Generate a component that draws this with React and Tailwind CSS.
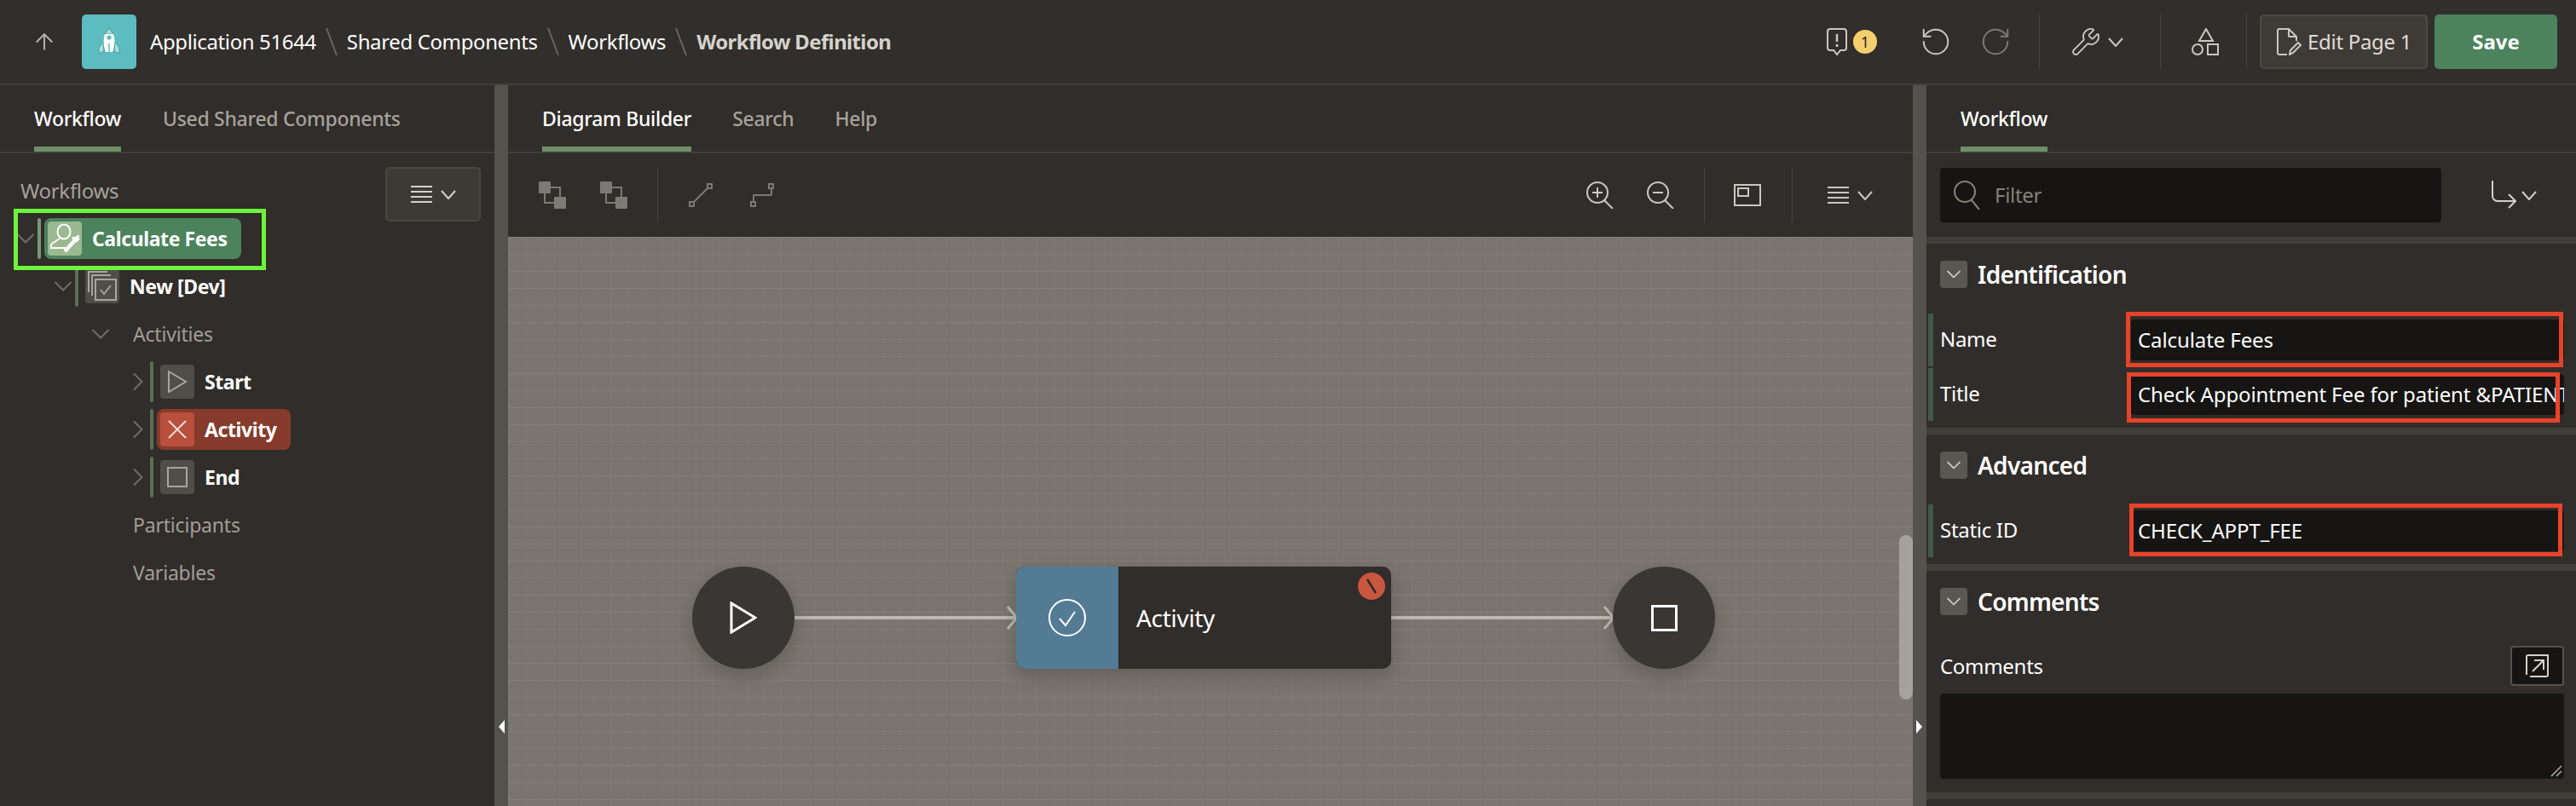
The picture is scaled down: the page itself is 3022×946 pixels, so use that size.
import { ChevronDown, ChevronRight, ArrowUp, Wrench, RotateCcw, RotateCw } from 'lucide-react';

const stroke = { fill: 'none', stroke: 'currentColor', strokeWidth: 2 };

function Chev({ className = 'w-5 h-5' }) {
    return <ChevronDown className={className} strokeWidth={1.5} />;
}

function MenuChev({ className = '' }) {
    return (
        <div className={`flex items-center gap-[10px] ${className}`}>
            <svg width="25" height="20" viewBox="0 0 25 20" {...stroke}>
                <path d="M0 1h25M0 7h25M0 13h25M0 19h25" />
            </svg>
            <svg width="18" height="11" viewBox="0 0 18 11" {...stroke}><path d="M1 1l8 9 8-9" /></svg>
        </div>
    );
}

function Tab({ label, active, className = '' }) {
    return (
        <div className={`h-full flex items-center relative ${active ? 'text-white' : 'text-[#a7a29c]'} ${className}`}>
            <span className="font-medium">{label}</span>
            {active && <div className="absolute left-0 right-0 bottom-0 h-[6px] bg-[#6f8f67]" />}
        </div>
    );
}

function Slash() {
    return (
        <svg width="14" height="34" viewBox="0 0 14 34" className="mx-[11px] text-[#6b6762]">
            <path d="M1 1l12 32" stroke="currentColor" strokeWidth="2" />
        </svg>
    );
}

function Header() {
    return (
        <div className="h-[100px] shrink-0 flex items-center border-b-2 border-[#423e3a] bg-[#312e2b]">
            <ArrowUp className="w-[30px] h-[30px] ml-[37px] text-[#b5b1ab]" strokeWidth={1.6} />
            <div className="ml-[29px] w-[64px] h-[64px] rounded-[5px] bg-[#5cbcbf] flex items-center justify-center">
                <svg width="26" height="34" viewBox="0 0 26 34">
                    <path d="M6 17l-5 7v7l6-3zM20 17l5 7v7l-6-3z" fill="#a9dcdb" stroke="#489a9c" strokeWidth="1" />
                    <path d="M13 1l5 7H8z" fill="#a9dcdb" stroke="#489a9c" strokeWidth="1" />
                    <path d="M8 8h10c2 5 2 14-1 21H9C6 22 6 13 8 8z" fill="#ffffff" />
                    <circle cx="13" cy="12" r="2.6" fill="#5cbcbf" />
                    <path d="M13 19v14" stroke="#5cbcbf" strokeWidth="1.5" />
                </svg>
            </div>
            <div className="ml-4 flex items-center text-[24px] text-white tracking-[-0.38px]">
                <span>Application 51644</span>
                <Slash />
                <span>Shared Components</span>
                <Slash />
                <span>Workflows</span>
                <Slash />
                <span className="font-bold text-[#d6d2cc] tracking-[-0.65px]">Workflow Definition</span>
            </div>

            <div className="ml-auto flex items-center h-[64px] text-[#cbc7c1]">
                <svg width="24" height="32" viewBox="0 0 24 32" {...stroke} className="mr-[7px]">
                    <path d="M4 1h16a3 3 0 0 1 3 3v19a3 3 0 0 1-3 3h-4l-4 5-4-5H4a3 3 0 0 1-3-3V4a3 3 0 0 1 3-3z" />
                    <path d="M12 7v9M12 19v3" strokeWidth="2.5" />
                </svg>
                <div className="w-[28px] h-[28px] rounded-full bg-[#f5cf6e] text-[#2b2826] text-[18px] flex items-center justify-center">1</div>
                <RotateCcw className="w-[38px] h-[38px] ml-[50px]" strokeWidth={1.25} />
                <RotateCw className="w-[38px] h-[38px] ml-[32px] text-[#7d7973]" strokeWidth={1.25} />
                <div className="w-px h-full bg-[#46423e] ml-[32px]" />
                <Wrench className="w-[36px] h-[36px] ml-[36px] -scale-x-100 rotate-90" strokeWidth={1.25} />
                <svg width="18" height="11" viewBox="0 0 18 11" {...stroke} className="ml-2"><path d="M1 1l8 9 8-9" /></svg>
                <div className="w-px h-full bg-[#46423e] ml-[43px]" />
                <svg width="32" height="32" viewBox="0 0 32 32" {...stroke} className="ml-[36px]">
                    <path d="M17 1l8 14H9z" />
                    <circle cx="7" cy="25" r="6" />
                    <rect x="19" y="19" width="12" height="12" />
                </svg>
                <div className="w-px h-full bg-[#46423e] ml-[32px]" />
                <div className="ml-[15px] w-[197px] h-[64px] rounded-[5px] border-2 border-[#4d4a45] bg-[#3e3b37] flex items-center pl-[18px]">
                    <svg width="30" height="32" viewBox="0 0 30 32" {...stroke}>
                        <path d="M12 31H3a2 2 0 0 1-2-2V3a2 2 0 0 1 2-2h11l9 9v5" />
                        <path d="M14 1v8a1 1 0 0 0 1 1h8" />
                        <path d="M15 31l1-5 9-9 3 3-9 9z" />
                    </svg>
                    <span className="ml-[6px] text-[24px] text-[#e0dcd6] tracking-[-0.3px]">Edit Page 1</span>
                </div>
                <div className="ml-[8px] mr-[22px] w-[144px] h-[64px] rounded-[5px] bg-[#4c825c] flex items-center justify-center text-white font-bold text-[24px]">Save</div>
            </div>
        </div>
    );
}

function TreeRow({ pad, chevron, label, icon, tone = 'plain', muted }) {
    return (
        <div className="h-[56px] flex items-center" style={{ paddingLeft: pad }}>
            <div className="w-[24px] shrink-0 flex justify-center text-[#6f6b66]">
                {chevron === 'down' && <ChevronDown className="w-[36px] h-[36px] shrink-0" strokeWidth={1.4} />}
                {chevron === 'right' && <ChevronRight className="w-[36px] h-[36px] shrink-0" strokeWidth={1.4} />}
            </div>
            {icon ? (
                <>
                    <div className={`ml-[2px] w-1 h-[48px] rounded-sm ${tone === 'green' ? 'bg-[#7b9577]' : 'bg-[#5a7054]'}`} />
                    <div
                        className={`ml-1 h-[48px] flex items-center rounded-[8px] pr-4 ${tone === 'error' ? 'bg-[#873b2c]' : tone === 'green' ? 'bg-[#4c825c]' : ''}`}
                    >
                        <div
                            className={`ml-1 w-[40px] h-[40px] rounded-[4px] flex items-center justify-center ${
                                tone === 'error' ? 'bg-[#b8503d] text-[#f6ddd6]' : tone === 'green' ? 'bg-[#9ab990] text-white' : 'bg-[#514d49] text-[#a8a49e]'
                            }`}
                        >
                            {icon}
                        </div>
                        <span className="ml-3 text-white font-bold text-[23px] tracking-[-0.4px]">{label}</span>
                    </div>
                </>
            ) : (
                <span className={`ml-[26px] text-[23px] tracking-[-0.2px] ${muted ? 'text-[#a29d97]' : 'text-white'}`}>{label}</span>
            )}
        </div>
    );
}

function LeftPanel() {
    return (
        <div className="w-[580px] shrink-0 flex flex-col bg-[#312d2a]">
            <div className="h-[80px] shrink-0 flex items-center pl-10 gap-[49px] border-b-2 border-[#423e3a] text-[23px] tracking-[-0.3px]">
                <Tab label="Workflow" active />
                <Tab label="Used Shared Components" />
            </div>
            <div className="relative flex-1">
                <div className="flex justify-between pt-4 pr-4 pl-6 h-[72px]">
                    <span className="text-[24px] text-[#a7a29c] tracking-[-0.3px] mt-[13px] leading-[30px]">Workflows</span>
                    <div className="w-[112px] h-[64px] rounded-[5px] border-2 border-[#4a4642] bg-[#3d3a36] flex items-center justify-center text-[#d4d0ca]">
                        <MenuChev />
                    </div>
                </div>
                <TreeRow
                    pad={18}
                    chevron="down"
                    label="Calculate Fees"
                    tone="green"
                    icon={
                        <svg width="40" height="40" viewBox="0 0 40 40" {...stroke}>
                            <ellipse cx="19" cy="12" rx="7.5" ry="8.5" />
                            <path d="M14 20l-9 6a2 2 0 0 0-1 2v3h17" />
                            <path d="M20 35l11-12" strokeWidth="4.5" />
                            <path d="M29 18a5 5 0 0 0 5 6l3-3-1-5-3 2" fill="currentColor" strokeWidth="1" />
                        </svg>
                    }
                />
                <TreeRow
                    pad={62}
                    chevron="down"
                    label="New [Dev]"
                    icon={
                        <svg width="40" height="40" viewBox="0 0 40 40" {...stroke}>
                            <path d="M4 27V3h22M8 31V7h22" />
                            <rect x="12" y="12" width="24" height="24" />
                            <path d="M18 24l4 5 8-10" />
                        </svg>
                    }
                />
                <TreeRow pad={106} chevron="down" label="Activities" muted />
                <TreeRow
                    pad={150}
                    chevron="right"
                    label="Start"
                    icon={
                        <svg width="24" height="26" viewBox="0 0 24 26" {...stroke}><path d="M2 1l20 12L2 25z" /></svg>
                    }
                />
                <TreeRow
                    pad={150}
                    chevron="right"
                    label="Activity"
                    tone="error"
                    icon={
                        <svg width="22" height="22" viewBox="0 0 22 22" {...stroke}><path d="M1 1l20 20M21 1L1 21" /></svg>
                    }
                />
                <TreeRow
                    pad={150}
                    chevron="right"
                    label="End"
                    icon={<div className="w-[24px] h-[24px] border-2 border-[#a8a49e]" />}
                />
                <TreeRow pad={106} label="Participants" muted />
                <TreeRow pad={106} label="Variables" muted />
                {/* annotation round the root node */}
                <div className="absolute left-4 top-[65px] w-[296px] h-[72px] border-[5px] border-[#6cf53c] pointer-events-none" />
            </div>
        </div>
    );
}

function Splitter({ dir }) {
    return (
        <div className="w-4 shrink-0 bg-[#55514c] relative">
            <div
                className={`absolute top-[745px] w-0 h-0 border-y-[8px] border-y-transparent ${dir === 'left' ? 'left-[5px] border-r-[7px] border-r-white' : 'left-[4px] border-l-[7px] border-l-white'}`}
            />
        </div>
    );
}

function ToolIcon({ children, className = '' }) {
    return <div className={`flex items-center justify-center ${className}`}>{children}</div>;
}

function Zoom({ minus }) {
    return (
        <svg width="32" height="32" viewBox="0 0 32 32" {...stroke}>
            <circle cx="13" cy="13" r="12" />
            <path d="M21 22l10 10M7 13h12" />
            {!minus && <path d="M13 7v12" />}
        </svg>
    );
}

function CenterToolbar() {
    return (
        <div className="h-[98px] shrink-0 flex items-center pl-9 text-[#7d7973]">
            <ToolIcon>
                <svg width="32" height="32" viewBox="0 0 32 32">
                    <rect x="7" y="7" width="18" height="18" fill="none" stroke="currentColor" strokeWidth="2" />
                    <rect x="0" y="0" width="14" height="14" rx="1" fill="currentColor" />
                    <rect x="18" y="18" width="14" height="14" rx="1" fill="currentColor" />
                </svg>
            </ToolIcon>
            <ToolIcon className="ml-10">
                <svg width="32" height="32" viewBox="0 0 32 32">
                    <path d="M7 7h18v18H7z" fill="none" stroke="currentColor" strokeWidth="2" />
                    <rect x="0" y="0" width="14" height="14" rx="1" fill="currentColor" />
                    <rect x="18" y="18" width="14" height="14" rx="1" fill="currentColor" />
                </svg>
            </ToolIcon>
            <div className="w-px h-[64px] bg-[#46423e] ml-[35px]" />
            <ToolIcon className="ml-9">
                <svg width="28" height="28" viewBox="0 0 28 28" {...stroke}>
                    <rect x="1" y="22" width="5" height="5" />
                    <rect x="22" y="1" width="5" height="5" />
                    <path d="M5 23L23 5" />
                </svg>
            </ToolIcon>
            <ToolIcon className="ml-[44px]">
                <svg width="28" height="28" viewBox="0 0 28 28" {...stroke}>
                    <rect x="1" y="22" width="5" height="5" />
                    <rect x="22" y="1" width="5" height="5" />
                    <path d="M4 22v-7a1 1 0 0 1 1-1h19a1 1 0 0 0 1-1V6" />
                </svg>
            </ToolIcon>

            <div className="ml-auto flex items-center h-[64px] text-[#cbc7c1] pr-[47px]">
                <Zoom />
                <div className="ml-[39px]"><Zoom minus /></div>
                <div className="w-px h-full bg-[#46423e] ml-[35px]" />
                <svg width="32" height="26" viewBox="0 0 32 26" {...stroke} className="ml-[34px]">
                    <rect x="1" y="1" width="30" height="24" />
                    <rect x="5" y="5" width="12" height="9" />
                </svg>
                <div className="w-px h-full bg-[#46423e] ml-[36px]" />
                <MenuChev className="ml-[41px]" />
            </div>
        </div>
    );
}

function Canvas() {
    return (
        <div className="relative flex-1 overflow-hidden bg-[#7a756e] bg-[linear-gradient(#837e77_1px,transparent_1px),linear-gradient(90deg,#7e7972_1px,transparent_1px)] bg-[size:20px_20px]">
            {/* diagram nodes sit on the free canvas, offsets are from 596,278 */}
            <svg width="1648" height="668" className="absolute inset-0 text-[#bdb8b1]">
                <path d="M336 447h262M1036 447h262" stroke="currentColor" strokeWidth="4" fill="none" />
                <path d="M586 434l11 13-11 13M1286 434l11 13-11 13" stroke="currentColor" strokeWidth="3" fill="none" />
            </svg>
            <div className="absolute left-[216px] top-[387px] w-[120px] h-[120px] rounded-full bg-[#393633] shadow-[0_8px_24px_rgba(0,0,0,0.2)] flex items-center justify-center text-white">
                <svg width="32" height="38" viewBox="0 0 32 38" {...stroke} strokeWidth="3"><path d="M2 2l28 17L2 36z" /></svg>
            </div>
            <div className="absolute left-[596px] top-[387px] w-[440px] h-[120px] rounded-[10px] overflow-hidden bg-[#312d2a] shadow-[0_8px_24px_rgba(0,0,0,0.2)] flex items-center text-white">
                <div className="w-[120px] h-full bg-[#547b94] flex items-center justify-center">
                    <svg width="44" height="44" viewBox="0 0 44 44" {...stroke}>
                        <circle cx="22" cy="22" r="21" />
                        <path d="M13 23l7 8 11-16" />
                    </svg>
                </div>
                <span className="ml-[21px] text-[28px] tracking-[-0.3px]">Activity</span>
            </div>
            <div className="absolute left-[997px] top-[394px] w-[32px] h-[32px] rounded-full bg-[#c9573f] flex items-center justify-center">
                <svg width="14" height="18" viewBox="0 0 14 18"><path d="M2 1l10 16" stroke="#2b2826" strokeWidth="2.5" /></svg>
            </div>
            <div className="absolute left-[1296px] top-[387px] w-[120px] h-[120px] rounded-full bg-[#393633] shadow-[0_8px_24px_rgba(0,0,0,0.2)] flex items-center justify-center">
                <div className="w-[31px] h-[31px] border-[3px] border-white" />
            </div>
            <div className="absolute right-0 top-[350px] w-4 h-[193px] rounded-full bg-[#a5a19c]" />
        </div>
    );
}

function CenterPanel() {
    return (
        <div className="flex-1 min-w-0 flex flex-col bg-[#312d2a]">
            <div className="h-[80px] shrink-0 flex items-center pl-10 gap-[48px] border-b-2 border-[#423e3a] text-[23px] tracking-[-0.3px]">
                <Tab label="Diagram Builder" active />
                <Tab label="Search" />
                <Tab label="Help" />
            </div>
            <CenterToolbar />
            <Canvas />
        </div>
    );
}

function SectionHead({ title }) {
    return (
        <div className="flex items-center pl-4 h-8">
            <div className="w-8 h-8 rounded-[4px] bg-[#5a5651] flex items-center justify-center text-[#d4d0ca]">
                <Chev className="w-7 h-7" />
            </div>
            <span className="ml-3 text-[28px] font-semibold text-white tracking-[-0.7px]">{title}</span>
        </div>
    );
}

function Field({ label, value, markClass }) {
    return (
        <div className="relative h-[62px] flex items-center pl-[2px]">
            <div className="w-[6px] h-full bg-[#3f5a46]" />
            <label className="w-[232px] pl-2 pb-[2px] text-[24px] text-white tracking-[-0.3px]">{label}</label>
            <input
                readOnly
                value={value}
                className="w-[508px] h-[48px] rounded-[4px] bg-[#161513] pl-2 pb-[2px] text-[24px] text-white tracking-[-0.1px] outline-none"
            />
            <div className={`absolute border-[5px] border-[#e8432a] pointer-events-none ${markClass}`} />
        </div>
    );
}

function RightPanel() {
    return (
        <div className="w-[762px] shrink-0 flex flex-col bg-[#312d2a]">
            <div className="h-[80px] shrink-0 flex items-center pl-10 border-b-2 border-[#423e3a] text-[23px] tracking-[-0.3px]">
                <Tab label="Workflow" active />
            </div>
            <div className="h-[98px] shrink-0 flex items-center pl-4">
                <div className="w-[588px] h-[64px] rounded-[4px] bg-[#161513] flex items-center pl-4 text-[#85817b]">
                    <svg width="32" height="34" viewBox="0 0 32 34" {...stroke}>
                        <circle cx="13" cy="13" r="12" />
                        <path d="M21 23l9 11" />
                    </svg>
                    <span className="ml-4 text-[24px] tracking-[-0.3px]">Filter</span>
                </div>
                <svg width="30" height="34" viewBox="0 0 30 34" {...stroke} className="ml-[58px] text-[#d4d0ca]">
                    <path d="M2 0v18a6 6 0 0 0 6 6h20M21 16l8 8-8 8" />
                </svg>
                <svg width="18" height="11" viewBox="0 0 18 11" {...stroke} className="ml-[6px] text-[#d4d0ca]"><path d="M1 1l8 9 8-9" /></svg>
            </div>
            <div className="h-2 bg-[#423e3a] shrink-0" />

            <div className="pt-5 pb-2">
                <SectionHead title="Identification" />
                <div className="mt-[30px] flex flex-col gap-[2px]">
                    <Field label="Name" value="Calculate Fees" markClass="left-[234px] -top-[2px] w-[513px] h-[65px]" />
                    <Field label="Title" value="Check Appointment Fee for patient &PATIENT_NAME." markClass="left-[235px] top-[5px] w-[508px] h-[59px]" />
                </div>
            </div>
            <div className="h-2 bg-[#423e3a] shrink-0" />

            <div className="pt-5 pb-2">
                <SectionHead title="Advanced" />
                <div className="mt-[30px]">
                    <Field label="Static ID" value="CHECK_APPT_FEE" markClass="left-[238px] -top-[1px] w-[508px] h-[62px]" />
                </div>
            </div>
            <div className="h-2 bg-[#423e3a] shrink-0" />

            <div className="pt-5 pl-4 pr-[14px] pb-4">
                <div className="-ml-4"><SectionHead title="Comments" /></div>
                <div className="mt-9 flex items-center justify-between h-[47px]">
                    <span className="text-[24px] text-white tracking-[-0.3px]">Comments</span>
                    <div className="w-[63px] h-[47px] rounded-[4px] border-2 border-[#55514c] bg-[#161513] flex items-center justify-center text-[#d4d0ca]">
                        <svg width="28" height="28" viewBox="0 0 28 28" {...stroke}>
                            <path d="M1 24V3a2 2 0 0 1 2-2h23v23a2 2 0 0 1-2 2H5M8 20L21 7M10 7h11v11" />
                        </svg>
                    </div>
                </div>
                <div className="relative mt-[9px] h-[100px] rounded-[4px] bg-[#161513]">
                    <svg width="14" height="14" viewBox="0 0 14 14" className="absolute right-[2px] bottom-[2px] text-[#b5b1ab]">
                        <path d="M1 13L13 1M7 13l6-6" stroke="currentColor" strokeWidth="1.5" />
                    </svg>
                </div>
            </div>
            <div className="h-2 bg-[#423e3a] shrink-0" />
        </div>
    );
}

export default function App() {
    return (
        <div className="w-[3022px] h-[946px] overflow-hidden flex flex-col bg-[#312d2a] font-['Noto_Sans','Liberation_Sans',sans-serif]">
            <Header />
            <div className="flex-1 min-h-0 flex">
                <LeftPanel />
                <Splitter dir="left" />
                <CenterPanel />
                <Splitter dir="right" />
                <RightPanel />
            </div>
        </div>
    );
}
